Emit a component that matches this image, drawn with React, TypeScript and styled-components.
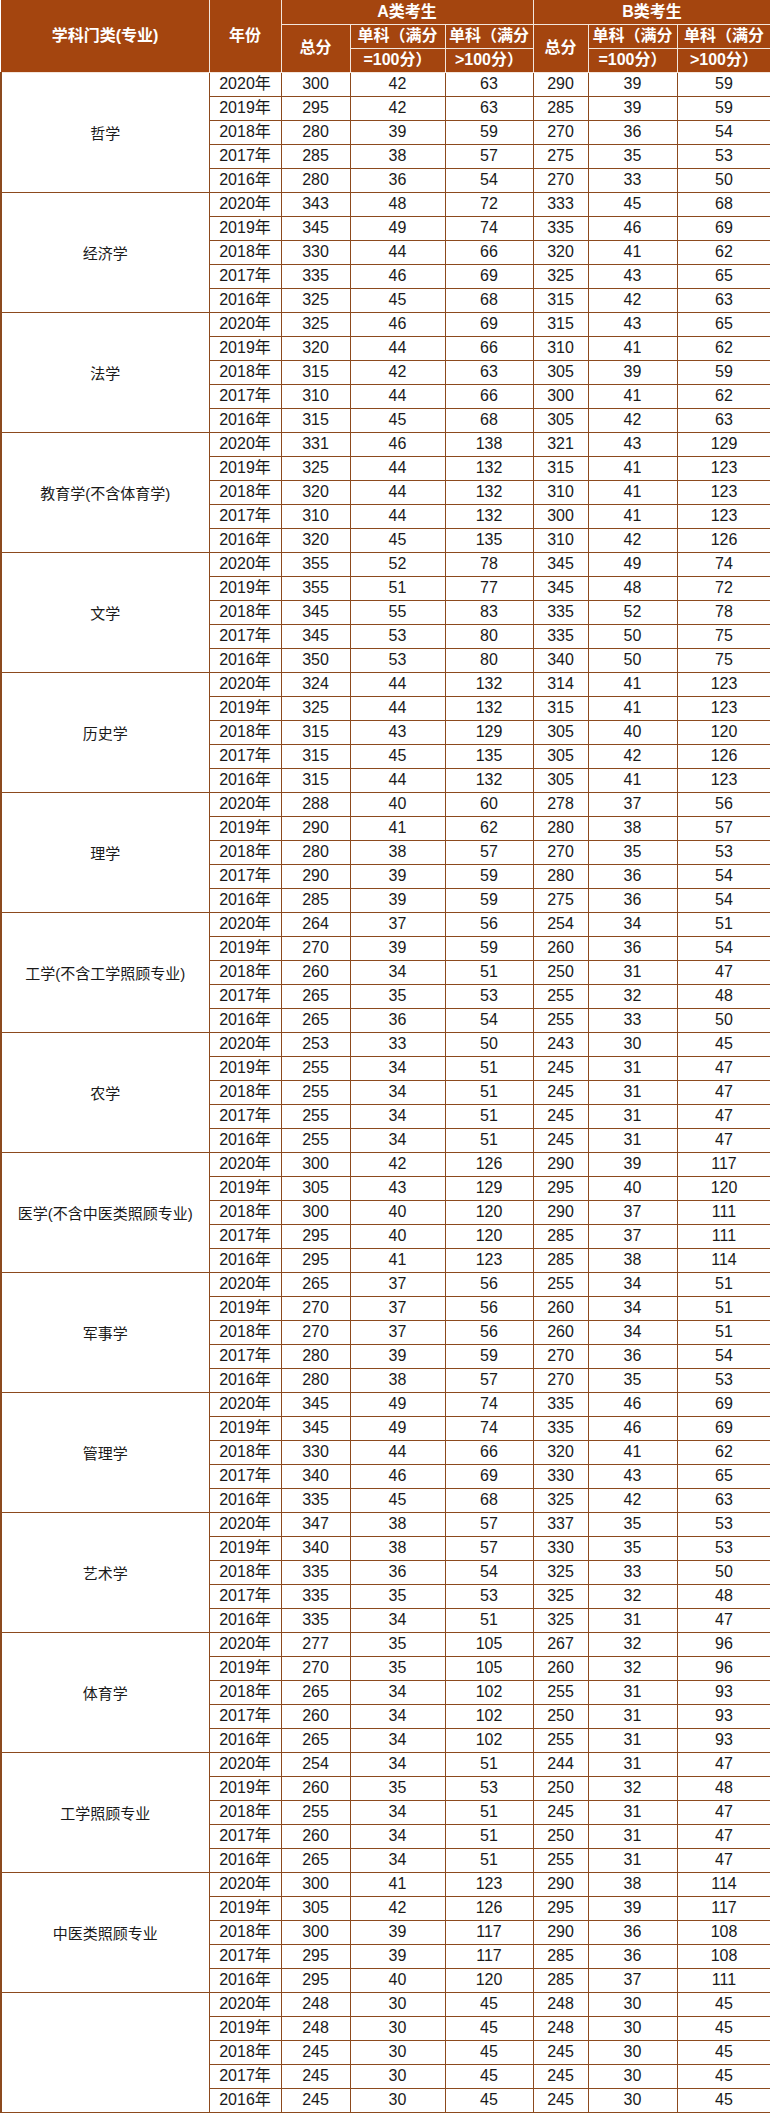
import styled, { createGlobalStyle } from "styled-components";

const GlobalStyle = createGlobalStyle`
  html, body {
    margin: 0;
    padding: 0;
    background: #ffffff;
  }
  body {
    font-family: "Liberation Sans", "Noto Sans CJK SC", sans-serif;
  }
`;

type Group = {
  name: string;
  rows: number[][];
};

const years = ["2020年", "2019年", "2018年", "2017年", "2016年"];

const groups: Group[] = [
  { name: "哲学", rows: [[300, 42, 63, 290, 39, 59], [295, 42, 63, 285, 39, 59], [280, 39, 59, 270, 36, 54], [285, 38, 57, 275, 35, 53], [280, 36, 54, 270, 33, 50]] },
  { name: "经济学", rows: [[343, 48, 72, 333, 45, 68], [345, 49, 74, 335, 46, 69], [330, 44, 66, 320, 41, 62], [335, 46, 69, 325, 43, 65], [325, 45, 68, 315, 42, 63]] },
  { name: "法学", rows: [[325, 46, 69, 315, 43, 65], [320, 44, 66, 310, 41, 62], [315, 42, 63, 305, 39, 59], [310, 44, 66, 300, 41, 62], [315, 45, 68, 305, 42, 63]] },
  { name: "教育学(不含体育学)", rows: [[331, 46, 138, 321, 43, 129], [325, 44, 132, 315, 41, 123], [320, 44, 132, 310, 41, 123], [310, 44, 132, 300, 41, 123], [320, 45, 135, 310, 42, 126]] },
  { name: "文学", rows: [[355, 52, 78, 345, 49, 74], [355, 51, 77, 345, 48, 72], [345, 55, 83, 335, 52, 78], [345, 53, 80, 335, 50, 75], [350, 53, 80, 340, 50, 75]] },
  { name: "历史学", rows: [[324, 44, 132, 314, 41, 123], [325, 44, 132, 315, 41, 123], [315, 43, 129, 305, 40, 120], [315, 45, 135, 305, 42, 126], [315, 44, 132, 305, 41, 123]] },
  { name: "理学", rows: [[288, 40, 60, 278, 37, 56], [290, 41, 62, 280, 38, 57], [280, 38, 57, 270, 35, 53], [290, 39, 59, 280, 36, 54], [285, 39, 59, 275, 36, 54]] },
  { name: "工学(不含工学照顾专业)", rows: [[264, 37, 56, 254, 34, 51], [270, 39, 59, 260, 36, 54], [260, 34, 51, 250, 31, 47], [265, 35, 53, 255, 32, 48], [265, 36, 54, 255, 33, 50]] },
  { name: "农学", rows: [[253, 33, 50, 243, 30, 45], [255, 34, 51, 245, 31, 47], [255, 34, 51, 245, 31, 47], [255, 34, 51, 245, 31, 47], [255, 34, 51, 245, 31, 47]] },
  { name: "医学(不含中医类照顾专业)", rows: [[300, 42, 126, 290, 39, 117], [305, 43, 129, 295, 40, 120], [300, 40, 120, 290, 37, 111], [295, 40, 120, 285, 37, 111], [295, 41, 123, 285, 38, 114]] },
  { name: "军事学", rows: [[265, 37, 56, 255, 34, 51], [270, 37, 56, 260, 34, 51], [270, 37, 56, 260, 34, 51], [280, 39, 59, 270, 36, 54], [280, 38, 57, 270, 35, 53]] },
  { name: "管理学", rows: [[345, 49, 74, 335, 46, 69], [345, 49, 74, 335, 46, 69], [330, 44, 66, 320, 41, 62], [340, 46, 69, 330, 43, 65], [335, 45, 68, 325, 42, 63]] },
  { name: "艺术学", rows: [[347, 38, 57, 337, 35, 53], [340, 38, 57, 330, 35, 53], [335, 36, 54, 325, 33, 50], [335, 35, 53, 325, 32, 48], [335, 34, 51, 325, 31, 47]] },
  { name: "体育学", rows: [[277, 35, 105, 267, 32, 96], [270, 35, 105, 260, 32, 96], [265, 34, 102, 255, 31, 93], [260, 34, 102, 250, 31, 93], [265, 34, 102, 255, 31, 93]] },
  { name: "工学照顾专业", rows: [[254, 34, 51, 244, 31, 47], [260, 35, 53, 250, 32, 48], [255, 34, 51, 245, 31, 47], [260, 34, 51, 250, 31, 47], [265, 34, 51, 255, 31, 47]] },
  { name: "中医类照顾专业", rows: [[300, 41, 123, 290, 38, 114], [305, 42, 126, 295, 39, 117], [300, 39, 117, 290, 36, 108], [295, 39, 117, 285, 36, 108], [295, 40, 120, 285, 37, 111]] },
  { name: "", rows: [[248, 30, 45, 248, 30, 45], [248, 30, 45, 248, 30, 45], [245, 30, 45, 245, 30, 45], [245, 30, 45, 245, 30, 45], [245, 30, 45, 245, 30, 45]] },
];

const colWidths = [208, 72, 69, 95, 88, 55, 89, 94];

const App = () => {
  return (
    <>
      <GlobalStyle />
      <Table>
        <colgroup>
          {colWidths.map((w, i) => (
            <col key={i} style={{ width: w }} />
          ))}
        </colgroup>
        <thead>
          <HeadRow>
            <HeadCell rowSpan={3}>学科门类(专业)</HeadCell>
            <HeadCell rowSpan={3}>年份</HeadCell>
            <HeadCell colSpan={3}>A类考生</HeadCell>
            <HeadCell colSpan={3}>B类考生</HeadCell>
          </HeadRow>
          <HeadRow>
            <HeadCell rowSpan={2}>总分</HeadCell>
            <HeadCell>单科（满分</HeadCell>
            <HeadCell>单科（满分</HeadCell>
            <HeadCell rowSpan={2}>总分</HeadCell>
            <HeadCell>单科（满分</HeadCell>
            <HeadCell>单科（满分</HeadCell>
          </HeadRow>
          <HeadRow>
            <HeadCell>=100分）</HeadCell>
            <HeadCell>&gt;100分）</HeadCell>
            <HeadCell>=100分）</HeadCell>
            <HeadCell>&gt;100分）</HeadCell>
          </HeadRow>
        </thead>
        <tbody>
          {groups.map((g, gi) =>
            g.rows.map((r, ri) => (
              <Row key={`${gi}-${ri}`}>
                {ri === 0 && <GroupCell rowSpan={5}>{g.name}</GroupCell>}
                <Cell>{years[ri]}</Cell>
                {r.map((v, vi) => (
                  <Cell key={vi}>{v}</Cell>
                ))}
              </Row>
            ))
          )}
        </tbody>
      </Table>
    </>
  );
};

const Table = styled.table`
  width: 770px;
  table-layout: fixed;
  border-collapse: collapse;
  border-bottom: 1px solid #8c4a1e;
`;

const HeadRow = styled.tr`
  height: 24px;
`;

const HeadCell = styled.th`
  background: #a4450f;
  color: #ffffff;
  font-weight: bold;
  font-size: 16px;
  line-height: 20px;
  padding: 0;
  text-align: center;
  white-space: nowrap;
  overflow: hidden;
  border: 1px solid #f3e6dc;
  border-top: none;
  &:first-child {
    border-left: 1px solid #a4450f;
  }
`;

const Row = styled.tr`
  height: 24px;
`;

const Cell = styled.td`
  padding: 0;
  font-size: 16px;
  line-height: 20px;
  color: #1a1a1a;
  text-align: center;
  white-space: nowrap;
  border: 1px solid #8c4a1e;
`;

const GroupCell = styled.td`
  padding: 0;
  font-size: 15px;
  color: #1a1a1a;
  text-align: center;
  white-space: nowrap;
  border: 1px solid #8c4a1e;
  border-left: 2px solid #8c4a1e;
`;

export default App;
